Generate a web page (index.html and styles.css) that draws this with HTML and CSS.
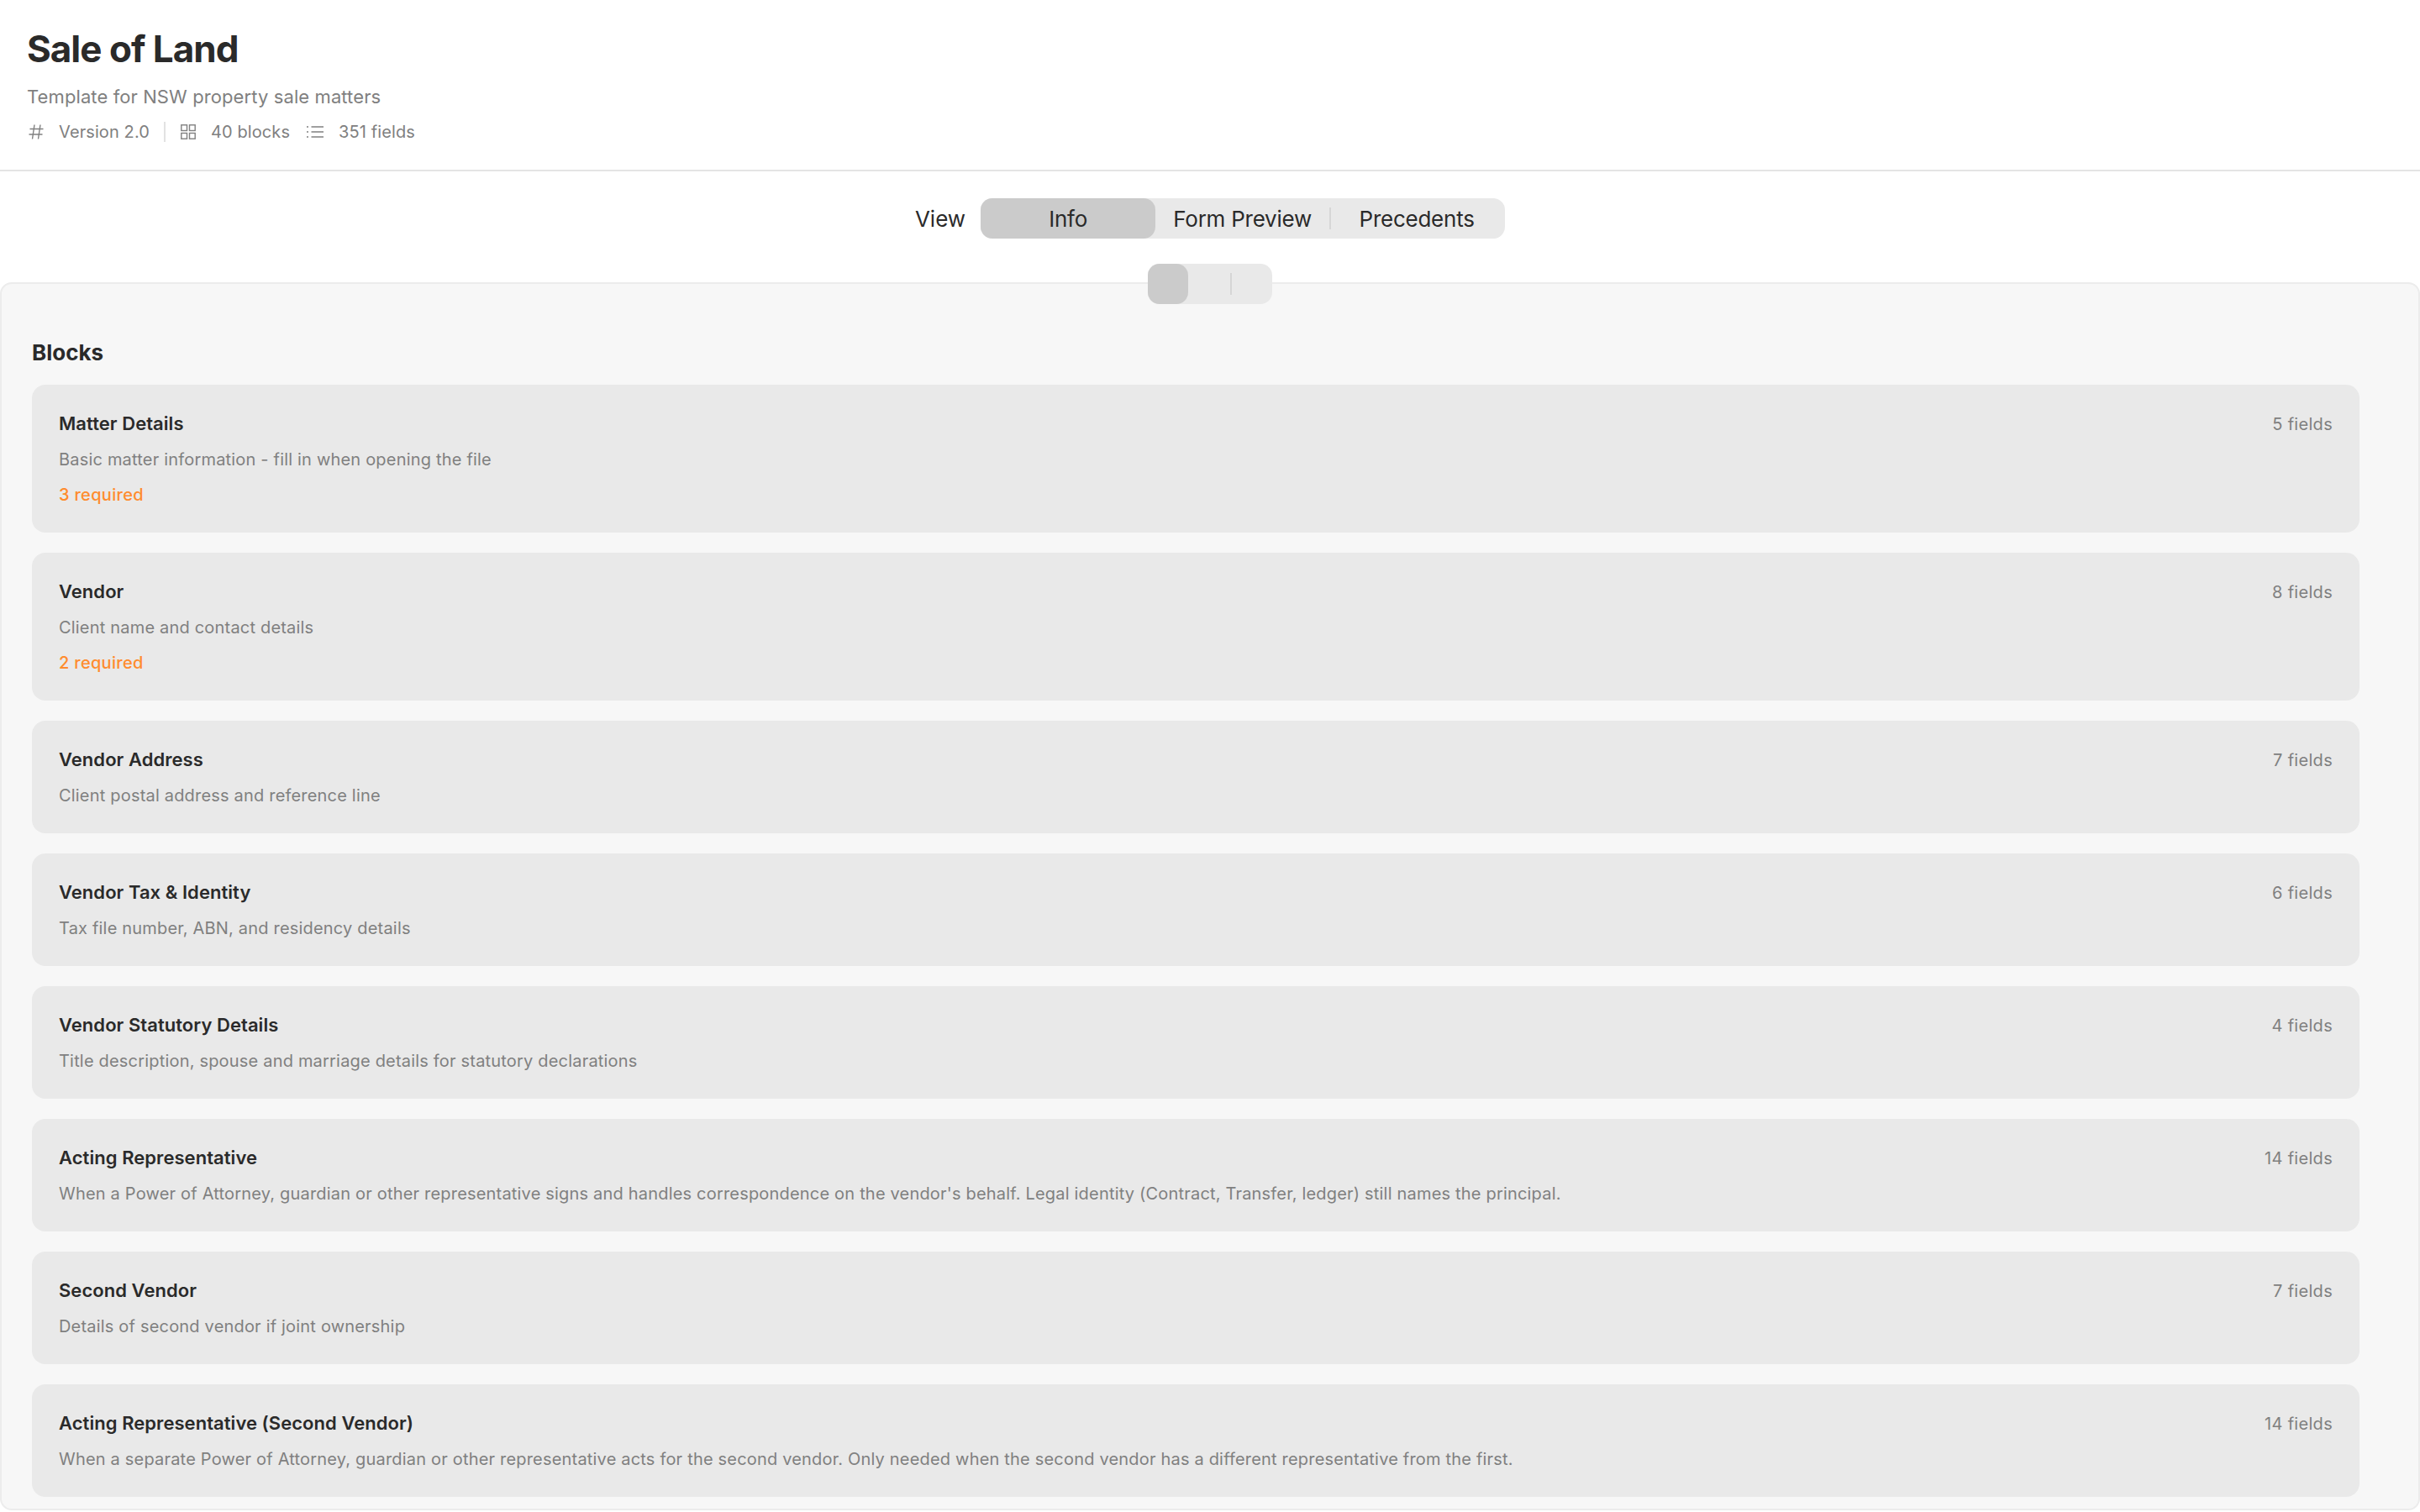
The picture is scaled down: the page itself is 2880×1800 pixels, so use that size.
FILE: index.html
```html
<!DOCTYPE html>
<html lang="en">
<head>
  <meta charset="UTF-8" />
  <title>Sale of Land</title>
  <link rel="stylesheet" href="styles.css">
</head>
<body>

  <header class="header">
    <h1>Sale of Land</h1>
    <p class="subtitle">Template for NSW property sale matters</p>
    <div class="meta">
      <svg class="meta-icon hash-icon" viewBox="0 0 18 18"><path d="M7 .5 4.500 17.500M14 .5 11.500 17.500M1.500 5.500h16M.5 12h16"/></svg>
      <span>Version 2.0</span>
      <span class="meta-divider"></span>
      <svg class="meta-icon" viewBox="0 0 18 18"><rect x=".8" y=".8" width="6.700" height="6.700"/><rect x="10.500" y=".8" width="6.700" height="6.700"/><rect x=".8" y="10.500" width="6.700" height="6.700"/><rect x="10.500" y="10.500" width="6.700" height="6.700"/></svg>
      <span>40 blocks</span>
      <svg class="meta-icon list-icon" viewBox="0 0 20 18"><path d="M5.500 3H20M5.500 9H20M5.500 15H20M0 3H2M0 9H2M0 15H2"/></svg>
      <span>351 fields</span>
    </div>
  </header>

  <div class="view-bar">
    <span class="view-label">View</span>
    <div class="segments">
      <button class="segment segment-active seg-info">Info</button>
      <button class="segment seg-form">Form Preview</button>
      <span class="segment-divider"></span>
      <button class="segment seg-prec">Precedents</button>
    </div>
  </div>

  <main class="panel">
    <div class="mini-segments">
      <span class="mini-active"></span>
      <span class="mini-divider"></span>
    </div>

    <h2>Blocks</h2>

    <div class="blocks">
      <div class="block">
        <div class="block-top"><span class="block-name">Matter Details</span><span class="block-count">5 fields</span></div>
        <div class="block-desc">Basic matter information - fill in when opening the file</div>
        <div class="block-req">3 required</div>
      </div>
      <div class="block">
        <div class="block-top"><span class="block-name">Vendor</span><span class="block-count">8 fields</span></div>
        <div class="block-desc">Client name and contact details</div>
        <div class="block-req">2 required</div>
      </div>
      <div class="block">
        <div class="block-top"><span class="block-name">Vendor Address</span><span class="block-count">7 fields</span></div>
        <div class="block-desc">Client postal address and reference line</div>
      </div>
      <div class="block">
        <div class="block-top"><span class="block-name">Vendor Tax &amp; Identity</span><span class="block-count">6 fields</span></div>
        <div class="block-desc">Tax file number, ABN, and residency details</div>
      </div>
      <div class="block">
        <div class="block-top"><span class="block-name">Vendor Statutory Details</span><span class="block-count">4 fields</span></div>
        <div class="block-desc">Title description, spouse and marriage details for statutory declarations</div>
      </div>
      <div class="block">
        <div class="block-top"><span class="block-name">Acting Representative</span><span class="block-count">14 fields</span></div>
        <div class="block-desc">When a Power of Attorney, guardian or other representative signs and handles correspondence on the vendor's behalf. Legal identity (Contract, Transfer, ledger) still names the principal.</div>
      </div>
      <div class="block">
        <div class="block-top"><span class="block-name">Second Vendor</span><span class="block-count">7 fields</span></div>
        <div class="block-desc">Details of second vendor if joint ownership</div>
      </div>
      <div class="block">
        <div class="block-top"><span class="block-name">Acting Representative (Second Vendor)</span><span class="block-count">14 fields</span></div>
        <div class="block-desc">When a separate Power of Attorney, guardian or other representative acts for the second vendor. Only needed when the second vendor has a different representative from the first.</div>
      </div>
    </div>
  </main>

</body>
</html>
```

FILE: styles.css
```css
* {
  box-sizing: border-box;
}

body {
  margin: 0;
  height: 1800px;
  overflow: hidden;
  font-family: Inter, 'Liberation Sans', sans-serif;
  background: #fff;
  color: #2a2a2a;
}

.header {
  height: 204px;
  padding: 34px 32px 0;
  border-bottom: 2px solid #e4e4e4;
}

h1 {
  margin: 0;
  font-size: 44px;
  line-height: 48px;
  font-weight: 700;
  letter-spacing: -1px;
}

.subtitle {
  margin: 18px 0 0;
  font-size: 22px;
  line-height: 30px;
  letter-spacing: 0.1px;
  color: #808080;
}

.meta {
  display: flex;
  align-items: center;
  height: 28px;
  margin-top: 13px;
  font-size: 20px;
  letter-spacing: 0.1px;
  color: #808080;
}

.meta-icon {
  width: 18px;
  height: 18px;
  margin: 0 18px 0 1px;
  fill: none;
  stroke: #808080;
  stroke-width: 1.4;
}

.hash-icon {
  margin: 0 18px 0 2px;
}

.list-icon {
  width: 20px;
  margin-left: 20px;
}

.meta-divider {
  width: 2px;
  height: 24px;
  margin: 0 17px;
  background: #e2e2e2;
}

.view-bar {
  display: flex;
  align-items: center;
  justify-content: center;
  height: 132px;
  padding-bottom: 20px;
}

.view-label {
  margin-right: 18px;
  font-size: 26px;
  color: #2a2a2a;
}

.segments {
  display: flex;
  align-items: center;
  height: 48px;
  background: #e9e9e9;
  border-radius: 14px;
}

.segment {
  height: 48px;
  padding: 0;
  border: none;
  border-radius: 14px;
  background: none;
  font-family: inherit;
  font-size: 26px;
  letter-spacing: -0.25px;
  color: #2a2a2a;
}

.seg-info {
  width: 208px;
}

.seg-form {
  width: 207px;
}

.seg-prec {
  width: 207px;
  padding-right: 3px;
}

.segment-active {
  background: #cbcbcb;
}

.segment-divider {
  width: 2px;
  height: 26px;
  background: #d6d6d6;
}

.panel {
  position: relative;
  height: 1462px;
  padding: 65px 70px 0 36px;
  background: #f7f7f7;
  border: 2px solid #ececec;
  border-radius: 14px;
}

.mini-segments {
  position: absolute;
  top: -24px;
  left: 1364px;
  display: flex;
  align-items: center;
  width: 148px;
  height: 48px;
  background: #e9e9e9;
  border-radius: 14px;
}

.mini-active {
  width: 48px;
  height: 48px;
  background: #cbcbcb;
  border-radius: 14px;
}

.mini-divider {
  width: 2px;
  height: 26px;
  margin-left: 50px;
  background: #d6d6d6;
}

h2 {
  margin: 0 0 21px;
  height: 34px;
  font-size: 26px;
  line-height: 34px;
  font-weight: 700;
}

.blocks {
  display: flex;
  flex-direction: column;
  gap: 24px;
}

.block {
  padding: 28px 32px 27px;
  background: #e9e9e9;
  border-radius: 16px;
}

.block-top {
  display: flex;
  justify-content: space-between;
  align-items: center;
  height: 36px;
}

.block-name {
  font-size: 22px;
  font-weight: 600;
  letter-spacing: 0.05px;
}

.block-count {
  padding-top: 1px;
  font-size: 20px;
  letter-spacing: 0.3px;
  color: #808080;
}

.block-desc {
  height: 36px;
  margin-top: 7px;
  font-size: 20px;
  line-height: 36px;
  letter-spacing: 0.19px;
  color: #808080;
}

.block-req {
  height: 36px;
  margin-top: 6px;
  font-size: 20px;
  line-height: 36px;
  font-weight: 500;
  letter-spacing: 0.3px;
  color: #ff8c2e;
}
```
